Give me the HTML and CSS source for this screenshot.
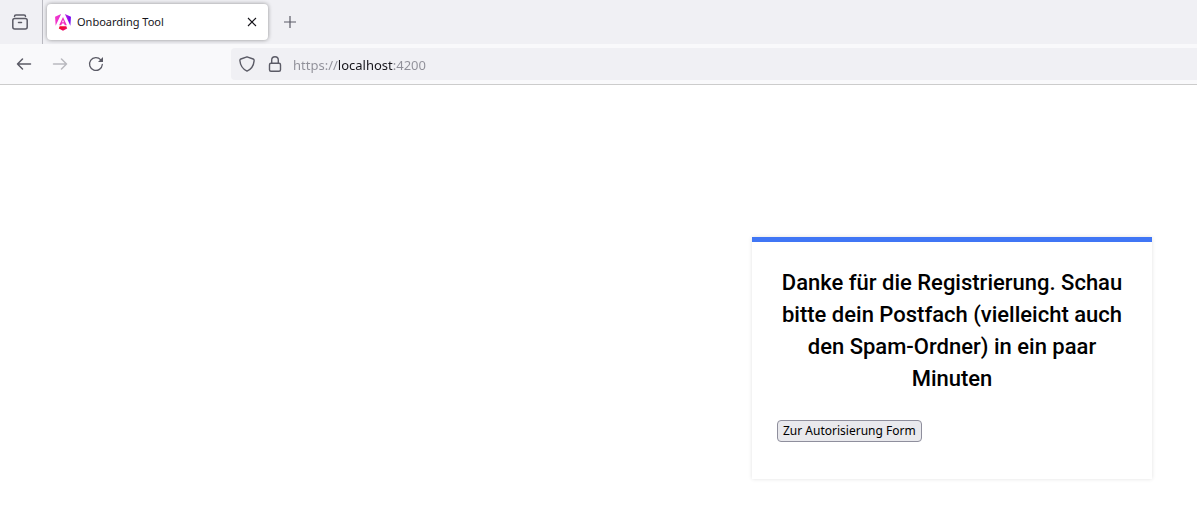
FILE: index.html
```html
<!DOCTYPE html>
<html lang="de">
<head>
<meta charset="utf-8">
<meta name="viewport" content="width=device-width, initial-scale=1">
<title>Onboarding Tool</title>
<link rel="stylesheet" href="styles.css">
</head>
<body>
<header class="browser">
  <div class="tab-strip">
    <button class="history-button" type="button" aria-label="Tabs">
      <svg width="16" height="16" viewBox="0 0 16 16" fill="none" stroke="currentColor" stroke-width="1.500" stroke-linecap="round">
        <path d="M2.500 2.500C2.500 1.500 3 1 4 1h8c1 0 1.500.5 1.500 1.500"/>
        <rect x=".8" y="4.500" width="14.400" height="10.500" rx="2"/>
        <path d="M6.500 8.500h3"/>
      </svg>
    </button>
    <div class="tab">
      <svg class="tab-logo" width="16" height="17" viewBox="0 0 223 236">
        <defs>
          <linearGradient id="logo-side" x1="0" y1="0" x2="1" y2="0">
            <stop offset="0" stop-color="#f637c8"/>
            <stop offset=".55" stop-color="#d62ad8"/>
            <stop offset="1" stop-color="#6c00f5"/>
          </linearGradient>
          <linearGradient id="logo-base" x1="0" y1="0" x2="1" y2="1">
            <stop offset="0" stop-color="#f0060b"/>
            <stop offset="1" stop-color="#f0088c"/>
          </linearGradient>
        </defs>
        <path fill="url(#logo-side)" d="M222.100 39.200l-8.100 125.700L137.300 0l84.800 39.200zM85.700 0L9 164.900.900 39.200 85.700 0z"/>
        <path fill="#f02cc0" fill-rule="evenodd" d="M111.500 42L58 156h29l10-25h29l10 25h29zM111.500 80l13 34h-26z"/>
        <path fill="url(#logo-base)" d="M169.700 200.800l-58.200 33.200-58.300-33.200 12.300-30h92z"/>
      </svg>
      <span class="tab-title">Onboarding Tool</span>
      <button class="tab-close" type="button" aria-label="Tab schließen">
        <svg width="10" height="10" viewBox="0 0 10 10" fill="none" stroke="currentColor" stroke-width="1.100"><path d="M1 1l8 8M9 1L1 9"/></svg>
      </button>
    </div>
    <button class="new-tab" type="button" aria-label="Neuer Tab">
      <svg width="12" height="12" viewBox="0 0 12 12" fill="none" stroke="currentColor" stroke-width="1.200"><path d="M6 0v12M0 6h12"/></svg>
    </button>
  </div>
  <div class="toolbar">
    <nav class="nav-buttons">
      <button type="button" aria-label="Zurück">
        <svg width="16" height="16" viewBox="0 0 16 16" fill="none" stroke="currentColor" stroke-width="1.500" stroke-linecap="round" stroke-linejoin="round"><path d="M14.500 8H1.500M6.500 3l-5 5 5 5"/></svg>
      </button>
      <button type="button" aria-label="Vorwärts" disabled>
        <svg width="16" height="16" viewBox="0 0 16 16" fill="none" stroke="currentColor" stroke-width="1.500" stroke-linecap="round" stroke-linejoin="round"><path d="M1.500 8h13M9.500 3l5 5-5 5"/></svg>
      </button>
      <button type="button" aria-label="Neu laden">
        <svg width="16" height="16" viewBox="0 0 16 16" fill="none" stroke="currentColor" stroke-width="1.300" stroke-linecap="round"><path d="M14.300 8.500A6.400 6.400 0 1 1 12.800 3.900"/><path d="M15 1v5h-5z" fill="currentColor" stroke="none"/></svg>
      </button>
    </nav>
    <div class="address-bar">
      <svg width="16" height="16" viewBox="0 0 16 16" fill="none" stroke="currentColor" stroke-width="1.400" stroke-linejoin="round"><path d="M8 .8L14.200 3c.8.300 1 .9.900 1.800-.4 4.300-2.800 8.300-7.100 10.300C3.700 13.100 1.300 9.100.9 4.800.8 3.900 1 3.300 1.800 3z"/></svg>
      <svg width="16" height="16" viewBox="0 0 16 16" fill="none" stroke="currentColor" stroke-width="1.400"><rect x="2.500" y="7.200" width="11" height="8" rx="1.500"/><path d="M4.700 7V4a3.300 3.300 0 0 1 6.600 0v3"/></svg>
      <input class="address" type="text" value="https://localhost:4200" aria-label="Adresse">
    </div>
  </div>
</header>
<main class="page">
  <section class="card">
    <h1 class="card-title">Danke für die Registrierung. Schau bitte dein Postfach (vielleicht auch den Spam-Ordner) in ein paar Minuten</h1>
    <button class="card-button" type="button">Zur Autorisierung Form</button>
  </section>
</main>
</body>
</html>
```
FILE: styles.css
```css
* {
  box-sizing: border-box;
}

body {
  margin: 0;
  background: #fff;
  color: #000;
  font-family: Roboto, "Liberation Sans", sans-serif;
}

svg {
  display: block;
  flex: none;
}

.browser {
  border-bottom: 1px solid #ccc;
  background: #f9f9fb;
  color: #5b5b66;
  font-family: "Noto Sans", "Open Sans", sans-serif;
}

.browser button {
  display: flex;
  align-items: center;
  justify-content: center;
  margin: 0;
  padding: 0;
  border: 0;
  background: none;
  color: inherit;
}

.tab-strip {
  display: flex;
  align-items: center;
  height: 44px;
  background: #f0f0f4;
}

.browser .history-button {
  width: 43px;
  height: 44px;
  padding-right: 3px;
  border-right: 1px solid #b9b9c0;
}

.tab {
  display: flex;
  align-items: center;
  gap: 6px;
  width: 221px;
  height: 36px;
  margin-left: 4px;
  padding: 0 11px 0 8px;
  border-radius: 4px;
  background: #fff;
  box-shadow: 0 0 4px rgba(0, 0, 0, 0.4);
  color: #15141a;
}

.tab-title {
  flex: 1;
  font-size: 11px;
  line-height: 16px;
}

.browser .new-tab {
  width: 32px;
  height: 32px;
  margin-left: 6px;
}

.toolbar {
  display: flex;
  align-items: center;
  height: 40px;
  padding-left: 8px;
}

.nav-buttons {
  display: flex;
  gap: 4px;
  width: 223px;
}

.nav-buttons button {
  width: 32px;
  height: 32px;
}

.nav-buttons button:disabled {
  opacity: 0.4;
}

.address-bar {
  display: flex;
  flex: 1;
  align-items: center;
  gap: 12px;
  height: 32px;
  padding-left: 8px;
  border-radius: 4px 0 0 4px;
  background: #f0f0f4;
}

/* The host name stands out from the scheme and the port. */
.address {
  flex: 1;
  min-width: 0;
  margin-left: -2px;
  padding: 2px 0 0;
  border: 0;
  outline: 0;
  background: linear-gradient(90deg, #8f8f98 46px, #15141a 46px 100px, #8f8f98 100px);
  background-clip: text;
  -webkit-background-clip: text;
  color: transparent;
  font: 13px/20px "Noto Sans", "Open Sans", sans-serif;
}

.page {
  display: flex;
  justify-content: flex-end;
  padding: 152px 45px 40px;
}

.card {
  width: 400px;
  padding: 25px 25px 37px;
  border-top: 5px solid #4076f5;
  box-shadow: 0 0 4px rgba(0, 0, 0, 0.12);
}

.card-title {
  margin: 0 0 25px;
  font-size: 22px;
  font-weight: 500;
  line-height: 32px;
  text-align: center;
}

.card-button {
  display: block;
  height: 22px;
  padding: 0 5px;
  border: 1px solid #8f8f9d;
  border-radius: 4px;
  background: #e9e9ed;
  color: #000;
  font: 12px/20px "Noto Sans", "Open Sans", sans-serif;
}
```
